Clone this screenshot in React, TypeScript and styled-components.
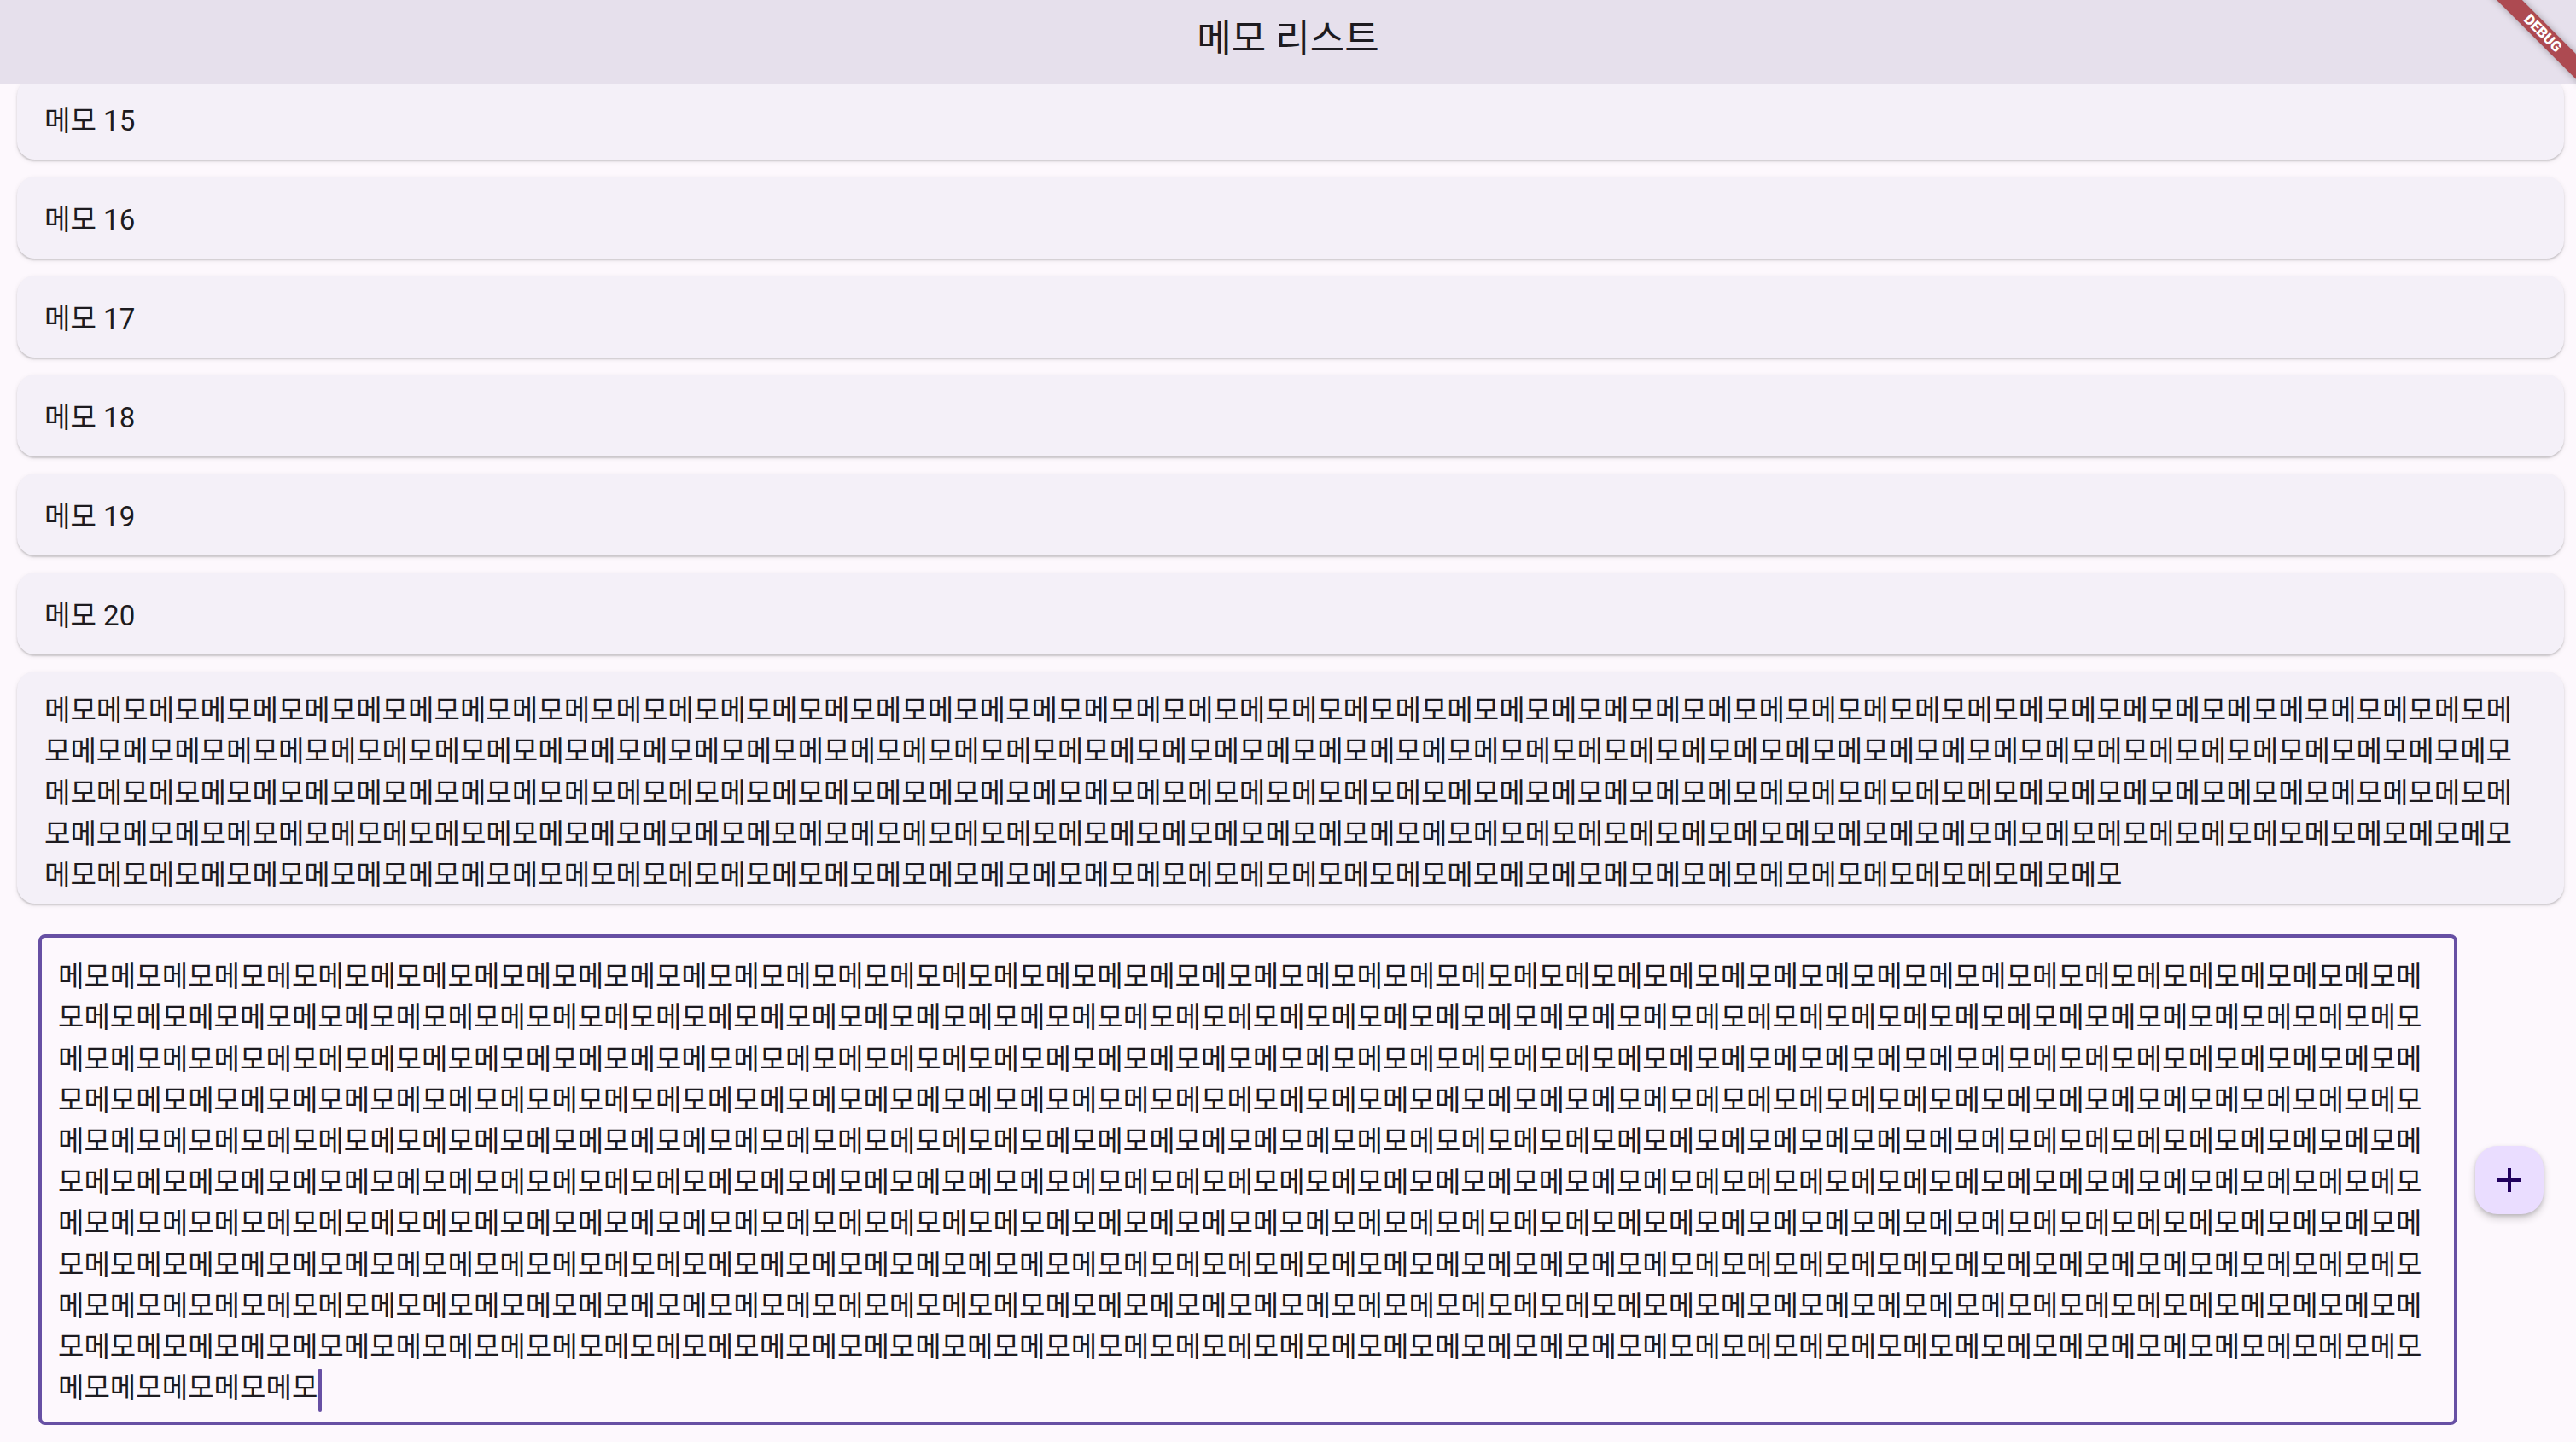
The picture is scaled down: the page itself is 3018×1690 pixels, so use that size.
import React from "react";
import styled, { createGlobalStyle } from "styled-components";

const GlobalStyle = createGlobalStyle`
  html, body {
    margin: 0;
    padding: 0;
    width: 100%;
    height: 100%;
    overflow: hidden;
    background: #fdf8fd;
  }
  #root {
    width: 100%;
    height: 100%;
  }
  * {
    box-sizing: border-box;
  }
`;

const FONT = `Roboto, "Noto Sans CJK KR", "Noto Sans", sans-serif`;

const Screen = styled.div`
  position: relative;
  display: flex;
  flex-direction: column;
  width: 100vw;
  height: 100vh;
  overflow: hidden;
  background: #fdf8fd;
  font-family: ${FONT};
  color: #1d1b20;
`;

const AppBar = styled.header`
  flex: 0 0 98px;
  display: flex;
  align-items: center;
  justify-content: center;
  padding-bottom: 6px;
  background: #e6e0ec;
`;

const Title = styled.h1`
  margin: 0;
  font-family: ${FONT};
  font-size: 44px;
  font-weight: 400;
  line-height: 1;
  color: #1d1b20;
`;

const MemoList = styled.main`
  flex: 1 1 auto;
  min-height: 0;
  overflow: hidden;
  display: flex;
  flex-direction: column;
  justify-content: flex-end;
  gap: 20px;
  padding: 0 14px 8px 20px;
`;

const MemoCard = styled.article<{ $long?: boolean }>`
  flex: 0 0 auto;
  display: flex;
  align-items: center;
  min-height: 96px;
  padding: ${(p) => (p.$long ? "22px 50px 9px 32px" : "6px 50px 0 32px")};
  background: #f4f0f8;
  border-radius: 21px;
  box-shadow: 0 2px 2px rgba(0, 0, 0, 0.16), 0 2px 6px rgba(0, 0, 0, 0.08);
`;

const MemoText = styled.p`
  margin: 0;
  min-width: 0;
  font-size: 33.1px;
  line-height: 48.2px;
  color: #1d1b20;
  word-break: break-all;
`;

const Composer = styled.footer`
  flex: 0 0 auto;
  display: flex;
  align-items: center;
  gap: 21px;
  padding: 28px 38px 20px 45px;
`;

const InputBox = styled.div`
  flex: 1 1 auto;
  min-width: 0;
  padding: 22px 27px 13px 19px;
  border: 4px solid #6750a4;
  border-radius: 8px;
  background: #fdf8fd;
  font-size: 33.1px;
  line-height: 48.2px;
  color: #1d1b20;
  word-break: break-all;
`;

const Caret = styled.span`
  display: inline-block;
  width: 4px;
  height: 51px;
  margin: -2px 0 -2px 1px;
  vertical-align: middle;
  border-radius: 2px;
  background: #6750a4;
`;

const Fab = styled.button`
  flex: 0 0 80px;
  width: 80px;
  height: 80px;
  display: flex;
  align-items: center;
  justify-content: center;
  padding: 0;
  border: none;
  border-radius: 26px;
  background: #eaddff;
  color: #21005d;
  box-shadow: 0 5px 10px rgba(0, 0, 0, 0.18), 0 2px 4px rgba(0, 0, 0, 0.12);
  cursor: pointer;
`;

const DebugBanner = styled.div`
  position: absolute;
  top: 39px;
  right: 39px;
  width: 200px;
  height: 21px;
  transform: translate(50%, -50%) rotate(45deg);
  background: rgba(160, 40, 46, 0.82);
  box-shadow: 0 0 8px rgba(0, 0, 0, 0.3);
  color: #ffffff;
  font-family: ${FONT};
  font-size: 17px;
  font-weight: 900;
  line-height: 21px;
  text-align: center;
  pointer-events: none;
`;

const PlusIcon = () => (
  <svg width="48" height="48" viewBox="0 0 24 24" fill="currentColor" aria-hidden="true">
    <path d="M19 13h-6v6h-2v-6H5v-2h6V5h2v6h6v2z" />
  </svg>
);

const memos: string[] = [
  ...Array.from({ length: 6 }, (_, i) => `메모 ${i + 15}`),
  "메모".repeat(230),
];

const draft = "메모".repeat(460);

export default function App() {
  return (
    <>
      <GlobalStyle />
      <Screen>
        <AppBar>
          <Title>메모 리스트</Title>
        </AppBar>
        <MemoList>
          {memos.map((memo, i) => (
            <MemoCard key={i} $long={memo.length > 20}>
              <MemoText>{memo}</MemoText>
            </MemoCard>
          ))}
        </MemoList>
        <Composer>
          <InputBox>
            {draft}
            <Caret />
          </InputBox>
          <Fab aria-label="추가">
            <PlusIcon />
          </Fab>
        </Composer>
        <DebugBanner>DEBUG</DebugBanner>
      </Screen>
    </>
  );
}
